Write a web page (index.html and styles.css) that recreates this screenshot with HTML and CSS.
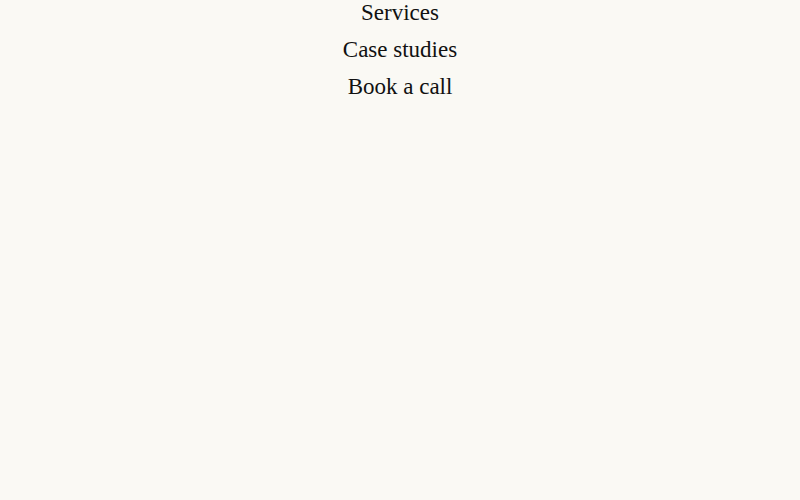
FILE: index.html
```html
<!DOCTYPE html>
<html>
<head>
<meta charset="utf-8">
<link rel="stylesheet" href="styles.css">
</head>
<body>
<nav class="menu">
  <a class="menu-link" href="#">Services</a>
  <a class="menu-link" href="#">Case studies</a>
  <a class="menu-link" href="#">Book a call</a>
</nav>
</body>
</html>
```

FILE: styles.css
```css
html, body {
  margin: 0;
  padding: 0;
  background: #faf9f4;
}
body {
  width: 800px;
  height: 500px;
  overflow: hidden;
}
.menu {
  display: flex;
  flex-direction: column;
  align-items: center;
  margin-top: -6px;
}
.menu-link {
  font-family: "Liberation Serif", serif;
  font-size: 23px;
  line-height: 37px;
  color: #111111;
  text-decoration: none;
}
```
